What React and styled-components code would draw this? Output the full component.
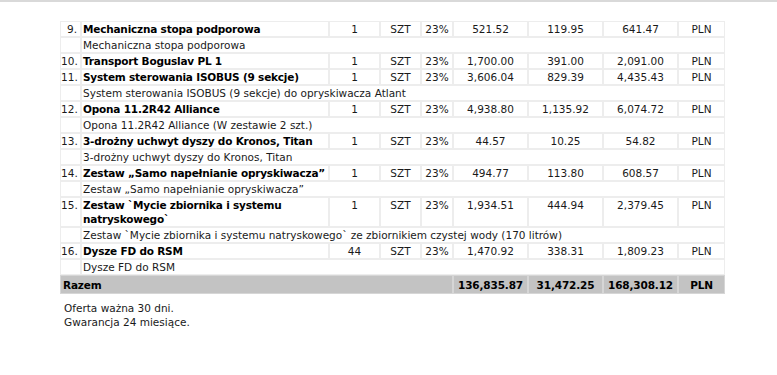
import React from 'react';
import styled, { createGlobalStyle } from 'styled-components';

const GlobalStyle = createGlobalStyle`
    body {
        margin: 0;
        background: #fff;
        font-family: "DejaVu Sans", Verdana, sans-serif;
        font-size: 10.5px;
        color: #111;
    }
`

const items = [
    { no: 9, name: 'Mechaniczna stopa podporowa', qty: 1, net: '521.52', vat: '119.95', gross: '641.47', desc: 'Mechaniczna stopa podporowa' },
    { no: 10, name: 'Transport Boguslav PL 1', qty: 1, net: '1,700.00', vat: '391.00', gross: '2,091.00' },
    { no: 11, name: 'System sterowania ISOBUS (9 sekcje)', qty: 1, net: '3,606.04', vat: '829.39', gross: '4,435.43', desc: 'System sterowania ISOBUS (9 sekcje) do opryskiwacza Atlant' },
    { no: 12, name: 'Opona 11.2R42 Alliance', qty: 1, net: '4,938.80', vat: '1,135.92', gross: '6,074.72', desc: 'Opona 11.2R42 Alliance (W zestawie 2 szt.)' },
    { no: 13, name: '3-drożny uchwyt dyszy do Kronos, Titan', qty: 1, net: '44.57', vat: '10.25', gross: '54.82', desc: '3-drożny uchwyt dyszy do Kronos, Titan' },
    { no: 14, name: 'Zestaw „Samo napełnianie opryskiwacza”', qty: 1, net: '494.77', vat: '113.80', gross: '608.57', desc: 'Zestaw „Samo napełnianie opryskiwacza”' },
    { no: 15, name: 'Zestaw `Mycie zbiornika i systemu natryskowego`', qty: 1, net: '1,934.51', vat: '444.94', gross: '2,379.45', desc: 'Zestaw `Mycie zbiornika i systemu natryskowego` ze zbiornikiem czystej wody (170 litrów)' },
    { no: 16, name: 'Dysze FD do RSM', qty: 44, net: '1,470.92', vat: '338.31', gross: '1,809.23', desc: 'Dysze FD do RSM' },
]

const App = () => {
    return (
        <>
            <GlobalStyle />
            <TopBar />
            <Content>
                <Table>
                    <colgroup>
                        <col style={{ width: 21 }} />
                        <col style={{ width: 248 }} />
                        <col style={{ width: 51 }} />
                        <col style={{ width: 41 }} />
                        <col style={{ width: 32 }} />
                        <col style={{ width: 75 }} />
                        <col style={{ width: 75 }} />
                        <col style={{ width: 75 }} />
                        <col style={{ width: 47 }} />
                    </colgroup>
                    <tbody>
                        {items.map((item) => (
                            <React.Fragment key={item.no}>
                                <tr>
                                    <NoCell>{item.no}.</NoCell>
                                    <NameCell>{item.name}</NameCell>
                                    <Cell>{item.qty}</Cell>
                                    <Cell>SZT</Cell>
                                    <Cell>23%</Cell>
                                    <Cell>{item.net}</Cell>
                                    <Cell>{item.vat}</Cell>
                                    <Cell>{item.gross}</Cell>
                                    <Cell>PLN</Cell>
                                </tr>
                                {item.desc && (
                                    <tr>
                                        <NoCell></NoCell>
                                        <DescCell colSpan={8}>{item.desc}</DescCell>
                                    </tr>
                                )}
                            </React.Fragment>
                        ))}
                        <tr>
                            <TotalCell colSpan={5} $left>Razem</TotalCell>
                            <TotalCell>136,835.87</TotalCell>
                            <TotalCell>31,472.25</TotalCell>
                            <TotalCell>168,308.12</TotalCell>
                            <TotalCell>PLN</TotalCell>
                        </tr>
                    </tbody>
                </Table>

                <Notes>
                    <p>Oferta ważna 30 dni.</p>
                    <p>Gwarancja 24 miesiące.</p>
                </Notes>
            </Content>
        </>
    )
}


const TopBar = styled.div`
    height: 2px;
    background-color: #d9d9d9;
`

const Content = styled.div`
    padding: 19px 0 0 60px;
`

const Table = styled.table`
    width: 665px;
    table-layout: fixed;
    border-collapse: separate;
    border-spacing: 0;
`

const Cell = styled.td`
    border: 1px solid #ededed;
    padding: 0 2px;
    line-height: 14px;
    text-align: center;
    vertical-align: top;
    white-space: nowrap;
    color: #1a1a1a;
`

const NoCell = styled(Cell)`
    text-align: right;
    padding: 0 3px 0 0;
`

const NameCell = styled(Cell)`
    text-align: left;
    white-space: normal;
    padding: 0 0 0 1px;
    font-weight: bold;
    letter-spacing: -0.2px;
    color: #000;
`

const DescCell = styled(Cell)`
    text-align: left;
    padding: 0 0 0 1px;
`

const TotalCell = styled.td`
    background-color: #c3c3c3;
    border: 1px solid #d6d6d6;
    padding: 2px 2px 1px;
    line-height: 14px;
    font-weight: bold;
    letter-spacing: -0.15px;
    color: #000;
    text-align: ${(props) => (props.$left ? 'left' : 'center')};
    white-space: nowrap;
`

const Notes = styled.div`
    margin-top: 7px;
    padding-left: 4px;
    color: #1a1a1a;

    p {
        margin: 0;
        line-height: 14px;
    }
`


export default App;
